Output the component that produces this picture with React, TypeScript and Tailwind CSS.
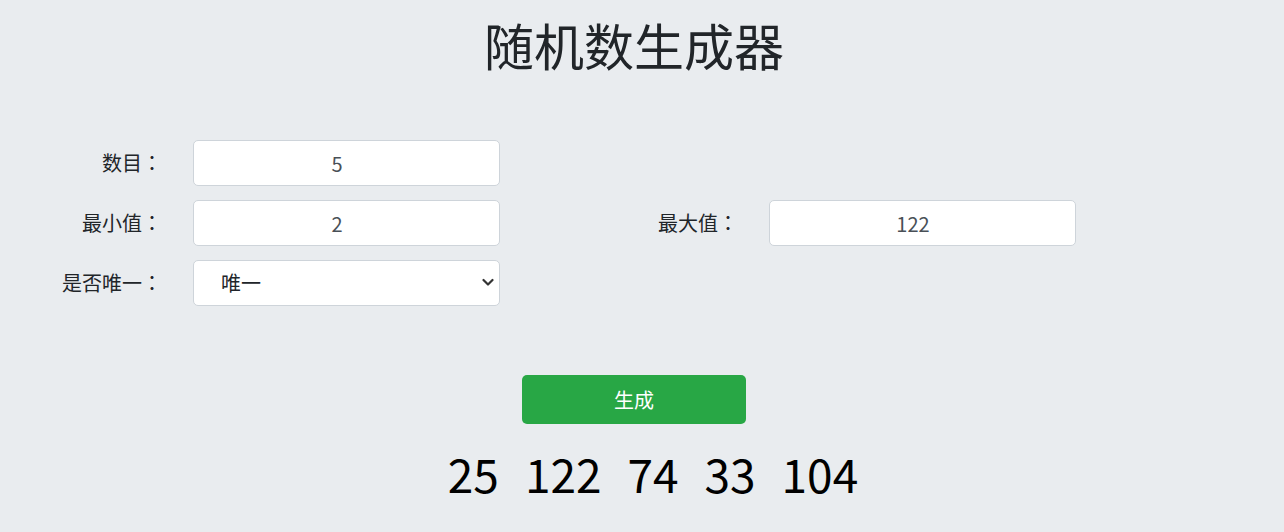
import React, { useState } from 'react';

const font = { fontFamily: '"Noto Sans CJK SC", "Noto Sans", sans-serif' };

const Field: React.FC<{ value: string }> = ({ value }) => (
  <input
    type="text"
    defaultValue={value}
    className="ml-[31px] h-[46px] w-[307px] rounded-[5px] border border-[#ced4da] bg-white pl-3 pr-[31px] text-center text-[20px] text-[#495057] outline-none"
  />
);

// full-width colon, centred in its box like the reference
const Colon = () => <span className="font-['Noto_Sans_CJK_TC']">：</span>;

const Label: React.FC<{ text: string; width: string }> = ({ text, width }) => (
  <label className={`${width} text-right`}>
    {text}
    <Colon />
  </label>
);

export default function App() {
  const [numbers] = useState([25, 122, 74, 33, 104]);

  return (
    <div className="min-h-[532px] bg-[#e9ecef] pr-[16px] text-[#212529]" style={font}>
      <h1 className="pt-[14px] text-center text-[50px] leading-[60px] font-normal">随机数生成器</h1>

      <div className="mt-[66px] flex flex-col gap-[14px] text-[20px]">
        <div className="flex h-[46px] items-center">
          <Label text="数目" width="w-[162px]" />
          <Field value="5" />
        </div>
        <div className="flex h-[46px] items-center">
          <Label text="最小值" width="w-[162px]" />
          <Field value="2" />
          <Label text="最大值" width="w-[238px]" />
          <Field value="122" />
        </div>
        <div className="flex h-[46px] items-center">
          <Label text="是否唯一" width="w-[162px]" />
          <div className="relative ml-[31px] h-[46px] w-[307px]">
            <select className="h-full w-full appearance-none rounded-[5px] border border-[#ced4da] bg-white pl-[27px] text-[20px] text-[#212529] outline-none">
              <option>唯一</option>
              <option>不唯一</option>
            </select>
            <svg
              className="pointer-events-none absolute right-[6px] top-[18px]"
              width="12"
              height="9"
              viewBox="0 0 12 9"
              fill="none"
            >
              <path d="M1.5 2l4.5 4.5L10.5 2" stroke="#333" strokeWidth="2.2" strokeLinecap="round" strokeLinejoin="round" />
            </svg>
          </div>
        </div>
      </div>

      <div className="mt-[69px] flex justify-center">
        <button className="h-[49px] w-[224px] rounded-[5px] bg-[#28a745] text-[20px] text-white">生成</button>
      </div>

      <div className="mt-[17px] flex justify-center gap-[26px] pl-[38px] text-[46px] leading-[64px] text-black">
        {numbers.map((n, i) => (
          <span key={i}>{n}</span>
        ))}
      </div>
    </div>
  );
}
